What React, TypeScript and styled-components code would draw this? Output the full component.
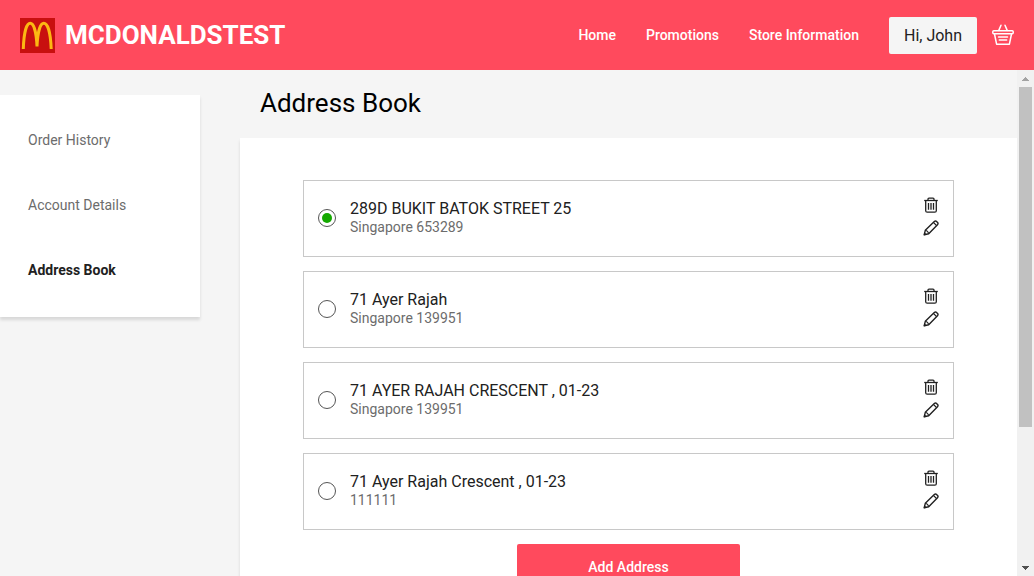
import React, { useState } from "react";
import styled, { createGlobalStyle } from "styled-components";

const GlobalStyle = createGlobalStyle`
  *, *::before, *::after { box-sizing: border-box; }
  body {
    margin: 0;
    background: #f5f5f5;
    font-family: Roboto, "Liberation Sans", sans-serif;
    color: #000;
  }
`;

const Shell = styled.div`
  display: flex;
  flex-direction: column;
  height: 100vh;
`;

const Header = styled.header`
  display: flex;
  flex: none;
  align-items: center;
  justify-content: space-between;
  height: 70px;
  padding: 0 20px;
  background: #ff4a5d;
`;

const Brand = styled.a`
  display: flex;
  align-items: center;
  gap: 10px;
  color: #fff;
  font-size: 26px;
  font-weight: 700;
  line-height: 32px;
  text-decoration: none;
`;

const Nav = styled.nav`
  display: flex;
  align-items: center;
  gap: 30px;
`;

const NavLink = styled.a`
  color: #fff;
  font-size: 14px;
  font-weight: 500;
  line-height: 20px;
  text-decoration: none;
`;

const UserArea = styled.div`
  display: flex;
  align-items: center;
  gap: 15px;
`;

const UserButton = styled.button`
  height: 37px;
  padding: 2px 15px 0;
  border: 0;
  border-radius: 2px;
  background: #f5f5f5;
  color: #212121;
  font: 400 16px/20px Roboto, sans-serif;
`;

const IconButton = styled.button`
  display: flex;
  padding: 0;
  border: 0;
  background: none;
  color: inherit;
`;

const BasketButton = styled(IconButton)`
  color: #fff;
`;

const Body = styled.div`
  display: flex;
  flex: 1;
  min-height: 0;
`;

const ScrollArea = styled.div`
  display: flex;
  flex: 1;
  align-items: flex-start;
  gap: 40px;
  min-width: 0;
  overflow-y: auto;
  scrollbar-width: none;
`;

const Sidebar = styled.nav`
  display: flex;
  flex: 0 0 200px;
  flex-direction: column;
  gap: 45px;
  margin-top: 25px;
  padding: 35px 28px 37px;
  background: #fff;
  box-shadow: 0 3px 3px rgba(0, 0, 0, 0.12);
`;

const SideLink = styled.a<{ $active?: boolean }>`
  color: ${(p) => (p.$active ? "#212121" : "#6c6c6c")};
  font-size: 14px;
  font-weight: ${(p) => (p.$active ? 700 : 400)};
  line-height: 20px;
  text-decoration: none;
`;

const Main = styled.main`
  flex: 1;
  min-width: 0;
`;

const Title = styled.h1`
  margin: 0;
  padding: 16px 20px 18px;
  font-size: 26px;
  font-weight: 400;
  line-height: 34px;
`;

const Panel = styled.form`
  display: flex;
  flex-direction: column;
  gap: 14px;
  padding: 42px 63px;
  background: #fff;
  box-shadow: 0 3px 3px rgba(0, 0, 0, 0.12);
`;

const AddressCard = styled.div`
  display: flex;
  align-items: center;
  justify-content: space-between;
  height: 77px;
  padding: 0 14px 2px;
  border: 1px solid #c8c8c8;
`;

const Choice = styled.label`
  display: flex;
  flex: 1;
  align-items: center;
  gap: 14px;
`;

const Radio = styled.input`
  display: grid;
  place-content: center;
  width: 18px;
  height: 18px;
  margin: 0;
  border: 1px solid #555;
  border-radius: 50%;
  appearance: none;

  &:checked::before {
    content: "";
    width: 10px;
    height: 10px;
    border-radius: 50%;
    background: #14a800;
  }
`;

const AddressText = styled.span`
  display: flex;
  flex-direction: column;
`;

const Street = styled.span`
  color: #212121;
  font-size: 16px;
  line-height: 20px;
`;

const City = styled.span`
  color: #6c6c6c;
  font-size: 14px;
  line-height: 17px;
`;

const Actions = styled.div`
  display: flex;
  flex-direction: column;
  gap: 7px;
  padding-bottom: 2px;
  color: #212121;
`;

const AddButton = styled.button`
  align-self: center;
  width: 223px;
  height: 46px;
  border: 0;
  border-radius: 2px;
  background: #ff4a5d;
  color: #fff;
  font: 500 14px/20px Roboto, sans-serif;
`;

const ScrollRail = styled.div`
  display: flex;
  flex: 0 0 17px;
  flex-direction: column;
  background: #f1f1f1;
`;

const RailArrow = styled.span<{ $dim?: boolean }>`
  display: flex;
  flex: 0 0 17px;
  align-items: center;
  justify-content: center;
  color: ${(p) => (p.$dim ? "#a3a3a3" : "#505050")};
`;

const RailTrack = styled.div`
  flex: 1;
  padding: 0 2px;
`;

const RailThumb = styled.div`
  height: 72%;
  background: #c1c1c1;
`;

const ArchesLogo = () => (
  <svg width="35" height="35" viewBox="0 0 35 35" aria-hidden="true">
    <rect width="35" height="35" fill="#c8100f" />
    <path
      d="M3.3 31C3.8 15 6.4 5.3 10.2 5.3C13.8 5.3 16.4 14 17 28.5C17.6 14 20.2 5.3 23.8 5.3C27.8 5.3 30.6 15 31.2 31"
      fill="none"
      stroke="#fcb813"
      strokeWidth="3"
    />
  </svg>
);

const BasketIcon = () => (
  <svg width="22" height="22" viewBox="0 0 22 22" fill="none" stroke="currentColor" strokeWidth="1.5" strokeLinejoin="round" strokeLinecap="round" aria-hidden="true">
    <path d="M9 1.2L6.8 6.4M13 1.2L15.2 6.4" />
    <rect x="0.8" y="6.8" width="20.4" height="2.9" rx="1" />
    <path d="M2.5 10L4.6 20.2H17.4L19.5 10" />
    <path d="M6.5 13H15.5M7.3 16H14.7" />
  </svg>
);

const TrashIcon = () => (
  <svg width="16" height="16" viewBox="0 0 16 16" fill="none" stroke="currentColor" strokeWidth="1.3" aria-hidden="true">
    <path d="M1.2 3.5H14.8" />
    <path d="M5 3.3V2.1Q5 1.1 6 1.1H10Q11 1.1 11 2.1V3.3" />
    <path d="M2.7 3.7V13.7Q2.7 15.2 4.2 15.2H11.8Q13.3 15.2 13.3 13.7V3.7" />
    <path d="M5.5 6V12.7M8 6V12.7M10.5 6V12.7" />
  </svg>
);

const PencilIcon = () => (
  <svg width="16" height="16" viewBox="0 0 16 16" fill="none" stroke="currentColor" strokeWidth="1.4" strokeLinejoin="round" aria-hidden="true">
    <path d="M1.2 14.8L2.3 10.3L11.3 1.5Q12.4 0.5 13.5 1.4L14.6 2.5Q15.5 3.6 14.5 4.7L5.7 13.7Z" />
    <path d="M2.5 10.3Q5 11 5.7 13.5M10.5 2.5L13.5 5.5" strokeWidth="1.1" />
    <path d="M1 15L1.6 12.7L3.3 14.4Z" fill="currentColor" strokeWidth="0.5" />
  </svg>
);

const addresses = [
  { street: "289D BUKIT BATOK STREET 25", city: "Singapore 653289" },
  { street: "71 Ayer Rajah", city: "Singapore 139951" },
  { street: "71 AYER RAJAH CRESCENT , 01-23", city: "Singapore 139951" },
  { street: "71 Ayer Rajah Crescent , 01-23", city: "111111" },
];

export default function App() {
  const [selected, setSelected] = useState(0);

  return (
    <>
      <GlobalStyle />
      <Shell>
        <Header>
          <Brand href="#home">
            <ArchesLogo />
            MCDONALDSTEST
          </Brand>
          <Nav aria-label="Main">
            <NavLink href="#home">Home</NavLink>
            <NavLink href="#promotions">Promotions</NavLink>
            <NavLink href="#store">Store Information</NavLink>
            <UserArea>
              <UserButton type="button">Hi, John</UserButton>
              <BasketButton type="button" aria-label="Basket">
                <BasketIcon />
              </BasketButton>
            </UserArea>
          </Nav>
        </Header>
        <Body>
          <ScrollArea>
            <Sidebar aria-label="Account">
              <SideLink href="#orders">Order History</SideLink>
              <SideLink href="#account">Account Details</SideLink>
              <SideLink href="#addresses" $active aria-current="page">
                Address Book
              </SideLink>
            </Sidebar>
            <Main>
              <Title>Address Book</Title>
              <Panel>
                {addresses.map((address, i) => (
                  <AddressCard key={i}>
                    <Choice>
                      <Radio
                        type="radio"
                        name="address"
                        checked={selected === i}
                        onChange={() => setSelected(i)}
                      />
                      <AddressText>
                        <Street>{address.street}</Street>
                        <City>{address.city}</City>
                      </AddressText>
                    </Choice>
                    <Actions>
                      <IconButton type="button" aria-label="Delete address">
                        <TrashIcon />
                      </IconButton>
                      <IconButton type="button" aria-label="Edit address">
                        <PencilIcon />
                      </IconButton>
                    </Actions>
                  </AddressCard>
                ))}
                <AddButton type="button">Add Address</AddButton>
              </Panel>
            </Main>
          </ScrollArea>
          <ScrollRail aria-hidden="true">
            <RailArrow $dim>
              <svg width="7" height="4" viewBox="0 0 7 4" fill="currentColor" shapeRendering="crispEdges">
                <path d="M3 0h1v1h1v1h1v1h1v1H0V3h1V2h1V1h1z" />
              </svg>
            </RailArrow>
            <RailTrack>
              <RailThumb />
            </RailTrack>
            <RailArrow>
              <svg width="7" height="4" viewBox="0 0 7 4" fill="currentColor" shapeRendering="crispEdges">
                <path d="M0 0h7v1H6v1H5v1H4v1H3V3H2V2H1V1H0z" />
              </svg>
            </RailArrow>
          </ScrollRail>
        </Body>
      </Shell>
    </>
  );
}
